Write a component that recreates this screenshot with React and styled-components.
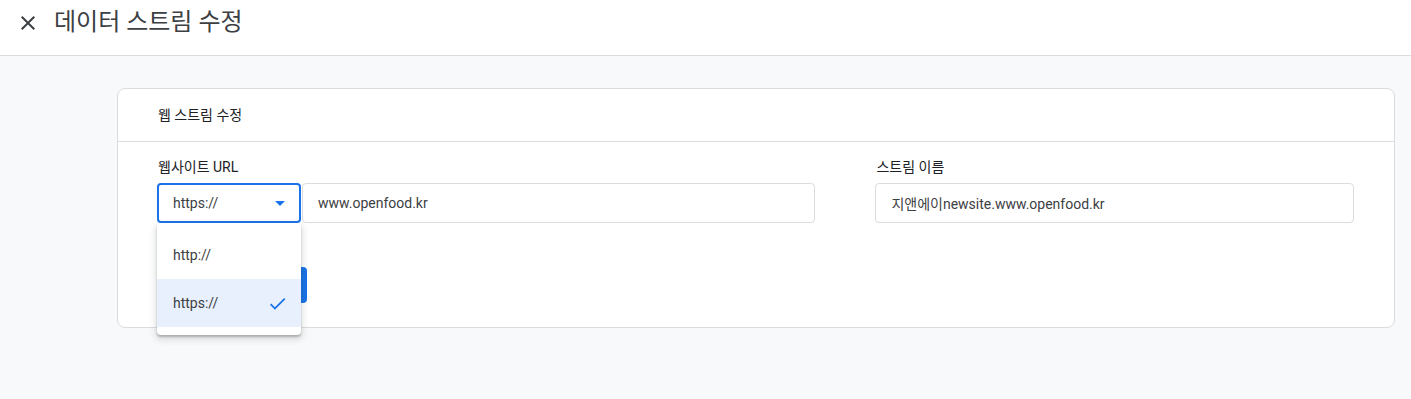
import styled, { createGlobalStyle } from "styled-components";

const GlobalStyle = createGlobalStyle`
  html, body {
    margin: 0;
    padding: 0;
    background: #f8f9fa;
    font-family: Roboto, "Noto Sans CJK KR", sans-serif;
    color: #202124;
  }
`;

export default function App() {
  return (
    <>
      <GlobalStyle />
      <Page>
        <Header>
          <CloseButton aria-label="닫기">
            <svg width="24" height="24" viewBox="0 0 24 24">
              <path
                fill="#3c4043"
                d="M19 6.41L17.59 5 12 10.59 6.41 5 5 6.41 10.59 12 5 17.59 6.41 19 12 13.41 17.59 19 19 17.59 13.41 12z"
              />
            </svg>
          </CloseButton>
          <Title>데이터 스트림 수정</Title>
        </Header>
        <Main>
          <Card>
            <CardHeader>웹 스트림 수정</CardHeader>
            <CardBody>
              <Fields>
                <Field>
                  <Label>웹사이트 URL</Label>
                  <UrlRow>
                    <SelectWrap>
                      <Select>
                        <span>https://</span>
                        <svg width="10" height="5" viewBox="0 0 10 5">
                          <path d="M0 0l5 5 5-5z" fill="#1a73e8" />
                        </svg>
                      </Select>
                      <Menu>
                        <MenuItem>http://</MenuItem>
                        <MenuItem selected>
                          https://
                          <svg width="21" height="21" viewBox="0 0 24 24">
                            <path
                              fill="#1a73e8"
                              d="M9 16.17L4.83 12l-1.42 1.41L9 19 21 7l-1.41-1.41z"
                            />
                          </svg>
                        </MenuItem>
                      </Menu>
                    </SelectWrap>
                    <Input value="www.openfood.kr" readOnly />
                  </UrlRow>
                </Field>
                <Field>
                  <Label>스트림 이름</Label>
                  <Input value="지앤에이newsite.www.openfood.kr" readOnly />
                </Field>
              </Fields>
              <Actions>
                <PrimaryButton>업데이트</PrimaryButton>
              </Actions>
            </CardBody>
          </Card>
        </Main>
      </Page>
    </>
  );
}

const Page = styled.div`
  min-height: 399px;
  display: flex;
  flex-direction: column;
`;

const Header = styled.header`
  height: 56px;
  background: #fff;
  border-bottom: 1px solid #dadce0;
  display: flex;
  align-items: flex-start;
  padding: 10px 0 0 16px;
  box-sizing: border-box;
  gap: 14px;
`;

const CloseButton = styled.button`
  width: 24px;
  height: 24px;
  padding: 0;
  margin-top: 1px;
  border: none;
  background: none;
  display: flex;
`;

const Title = styled.h1`
  margin: 0;
  font-size: 24px;
  line-height: 24px;
  font-weight: 400;
  color: #3c4043;
`;

const Main = styled.main`
  padding: 32px 16px 0 117px;
`;

const Card = styled.section`
  background: #fff;
  border: 1px solid #dadce0;
  border-radius: 8px;
`;

const CardHeader = styled.div`
  padding: 16px 40px;
  font-size: 14px;
  line-height: 20px;
  color: #202124;
  border-bottom: 1px solid #dadce0;
`;

const CardBody = styled.div`
  padding: 15px 40px 24px 39px;
`;

const Fields = styled.div`
  display: grid;
  grid-template-columns: 659fr 479fr;
  column-gap: 60px;
`;

const Field = styled.div`
  display: flex;
  flex-direction: column;
`;

const Label = styled.label`
  font-size: 14px;
  line-height: 20px;
  color: #202124;
  margin: 0 0 6px 1px;
`;

const UrlRow = styled.div`
  display: flex;
  gap: 1px;
`;

const SelectWrap = styled.div`
  position: relative;
  width: 144px;
  flex: none;
`;

const Select = styled.div`
  height: 40px;
  box-sizing: border-box;
  border: 2px solid #1a73e8;
  border-radius: 4px;
  padding: 0 14px 0 14px;
  display: flex;
  align-items: center;
  justify-content: space-between;
  font-size: 14px;
  color: #3c4043;
`;

const Menu = styled.ul`
  position: absolute;
  top: 40px;
  left: 0;
  width: 144px;
  margin: 0;
  padding: 8px 0;
  list-style: none;
  background: #fff;
  border-radius: 4px;
  box-shadow: 0 2px 2px 0 rgba(60, 64, 67, 0.3),
    0 3px 6px 2px rgba(60, 64, 67, 0.15);
  z-index: 2;
`;

const MenuItem = styled.li`
  height: 48px;
  padding: 0 13px 0 16px;
  display: flex;
  align-items: center;
  justify-content: space-between;
  font-size: 14px;
  color: #3c4043;
  background: ${(p) => (p.selected ? "#e8f0fe" : "transparent")};
`;

const Input = styled.input`
  flex: 1;
  min-width: 0;
  height: 40px;
  box-sizing: border-box;
  border: 1px solid #dadce0;
  border-radius: 4px;
  padding: 0 15px;
  font-family: Roboto, "Noto Sans CJK KR", sans-serif;
  font-size: 14px;
  color: #3c4043;
  outline: none;
`;

const Actions = styled.div`
  margin-top: 44px;
  display: flex;
`;

const PrimaryButton = styled.button`
  width: 150px;
  height: 36px;
  border: none;
  border-radius: 4px;
  background: #1a73e8;
  color: #fff;
  font-family: Roboto, "Noto Sans CJK KR", sans-serif;
  font-size: 14px;
  font-weight: 500;
`;
